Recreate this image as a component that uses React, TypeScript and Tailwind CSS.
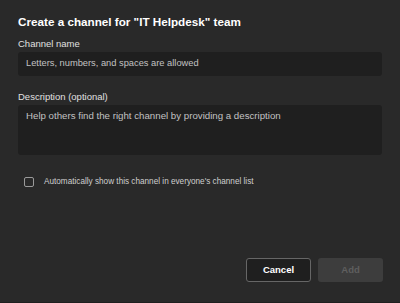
import React from 'react';

const font = { fontFamily: '"Liberation Sans", Arial, sans-serif' };

const App: React.FC = () => {
  return (
    <div
      className="w-[400px] h-[303px] bg-[#292929] border-b border-[#1f1f1f] flex flex-col px-[18px] pt-[14px] pb-[20px] text-[#e6e6e6]"
      style={font}
    >
      {/* Title */}
      <h1 className="text-[11.7px] leading-4 font-bold text-white">
        Create a channel for "IT Helpdesk" team
      </h1>

      {/* Channel name */}
      <label className="mt-[8px] text-[9.5px] leading-3 text-[#e0e0e0]">Channel name</label>
      <div className="mt-[2px] h-[24px] rounded-[3px] bg-[#1f1f1f] flex items-center px-[8px]">
        <span className="text-[9.3px] text-[#c2c2c2]">Letters, numbers, and spaces are allowed</span>
      </div>

      {/* Description */}
      <label className="mt-[15px] text-[9.5px] leading-3 text-[#e0e0e0]">Description (optional)</label>
      <div className="mt-[2px] h-[50px] rounded-[3px] bg-[#1f1f1f] px-[8px] pt-[5px]">
        <p className="text-[9.7px] leading-3 text-[#c2c2c2]">
          Help others find the right channel by providing a description
        </p>
      </div>

      {/* Checkbox */}
      <div className="mt-[21px] flex items-center pl-[6px] gap-[10px]">
        <div className="w-[10px] h-[10px] rounded-[2px] border border-[#9a9a9a]" />
        <span className="text-[8.2px] leading-3 text-[#cfcfcf]">
          Automatically show this channel in everyone's channel list
        </span>
      </div>

      {/* Actions */}
      <div className="mt-auto flex justify-end gap-[7px] -mr-px">
        <button className="w-[65px] h-[24px] rounded-[3px] bg-[#1f1f1f] border border-[#666666] text-[9.5px] font-bold text-white">
          Cancel
        </button>
        <button className="w-[65px] h-[24px] rounded-[3px] bg-[#3d3d3d] text-[9.5px] font-bold text-[#5f5f5f]">
          Add
        </button>
      </div>
    </div>
  );
};

export default App;
